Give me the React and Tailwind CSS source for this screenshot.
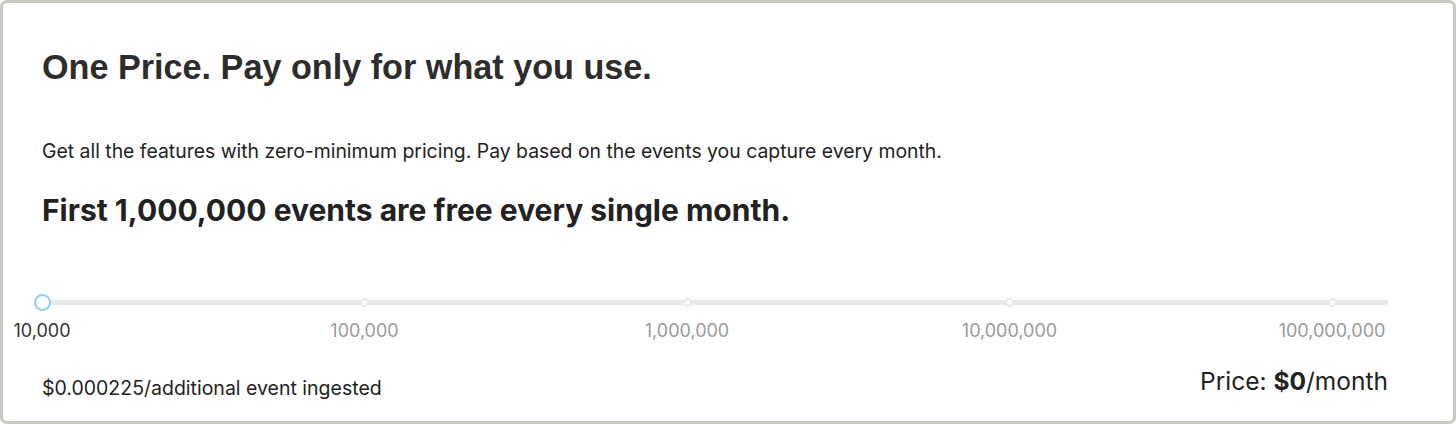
const marks = [
  { label: '10,000', active: true },
  { label: '100,000' },
  { label: '1,000,000' },
  { label: '10,000,000' },
  { label: '100,000,000' },
];

export default function App() {
  return (
    <div className="w-[1456px] h-[424px] bg-white">
      <div className="h-full border-[3px] border-[#c8c9c3] rounded-[7px] pl-[39px] pr-[65px] pt-[44px] text-[#222] font-['Inter','Liberation_Sans',sans-serif]">
        <h1 className="text-[34.2px] leading-[40px] font-bold font-['Liberation_Sans',Arial,sans-serif] text-[#2d2d2d]">
          One Price. Pay only for what you use.
        </h1>
        <p className="mt-[50px] text-[19.4px] leading-[28px]">
          Get all the features with zero-minimum pricing. Pay based on the events you capture every month.
        </p>
        <h2 className="mt-[27px] text-[30px] leading-[36px] font-bold">
          First 1,000,000 events are free every single month.
        </h2>

        <div className="mt-[66px] relative h-[16px]">
          <div className="absolute left-0 right-0 top-[6px] h-[5px] rounded-full bg-[#e9e9e9]" />
          <div className="absolute left-0 w-[1290px] top-0 h-[16px]">
            {marks.map((m, i) => (
              <div
                key={m.label}
                className="absolute top-0 h-[16px] w-0 flex items-center justify-center"
                style={{ left: `${i * 25}%` }}
              >
                {m.active ? (
                  <span className="shrink-0 w-[17px] h-[17px] rounded-full bg-white border-2 border-[#91cbf3]" />
                ) : (
                  <span className="shrink-0 w-[9px] h-[9px] rounded-full bg-white border-2 border-[#e9e9e9]" />
                )}
              </div>
            ))}
          </div>
        </div>
        <div className="relative h-[24px] mt-[9px] w-[1290px]">
          {marks.map((m, i) => (
            <span
              key={m.label}
              className={`absolute top-0 -translate-x-1/2 text-[18px] leading-[24px] whitespace-nowrap ${m.active ? 'text-[#333]' : 'text-[#9a9a9a]'}`}
              style={{ left: `${i * 25}%` }}
            >
              {m.label}
            </span>
          ))}
        </div>

        <div className="mt-[23px] flex items-start justify-between">
          <span className="mt-[8px] text-[19.5px] leading-[28px]">$0.000225/additional event ingested</span>
          <span className="text-[24.5px] leading-[30px]">
            Price: <b className="font-bold">$0</b>/month
          </span>
        </div>
      </div>
    </div>
  );
}
